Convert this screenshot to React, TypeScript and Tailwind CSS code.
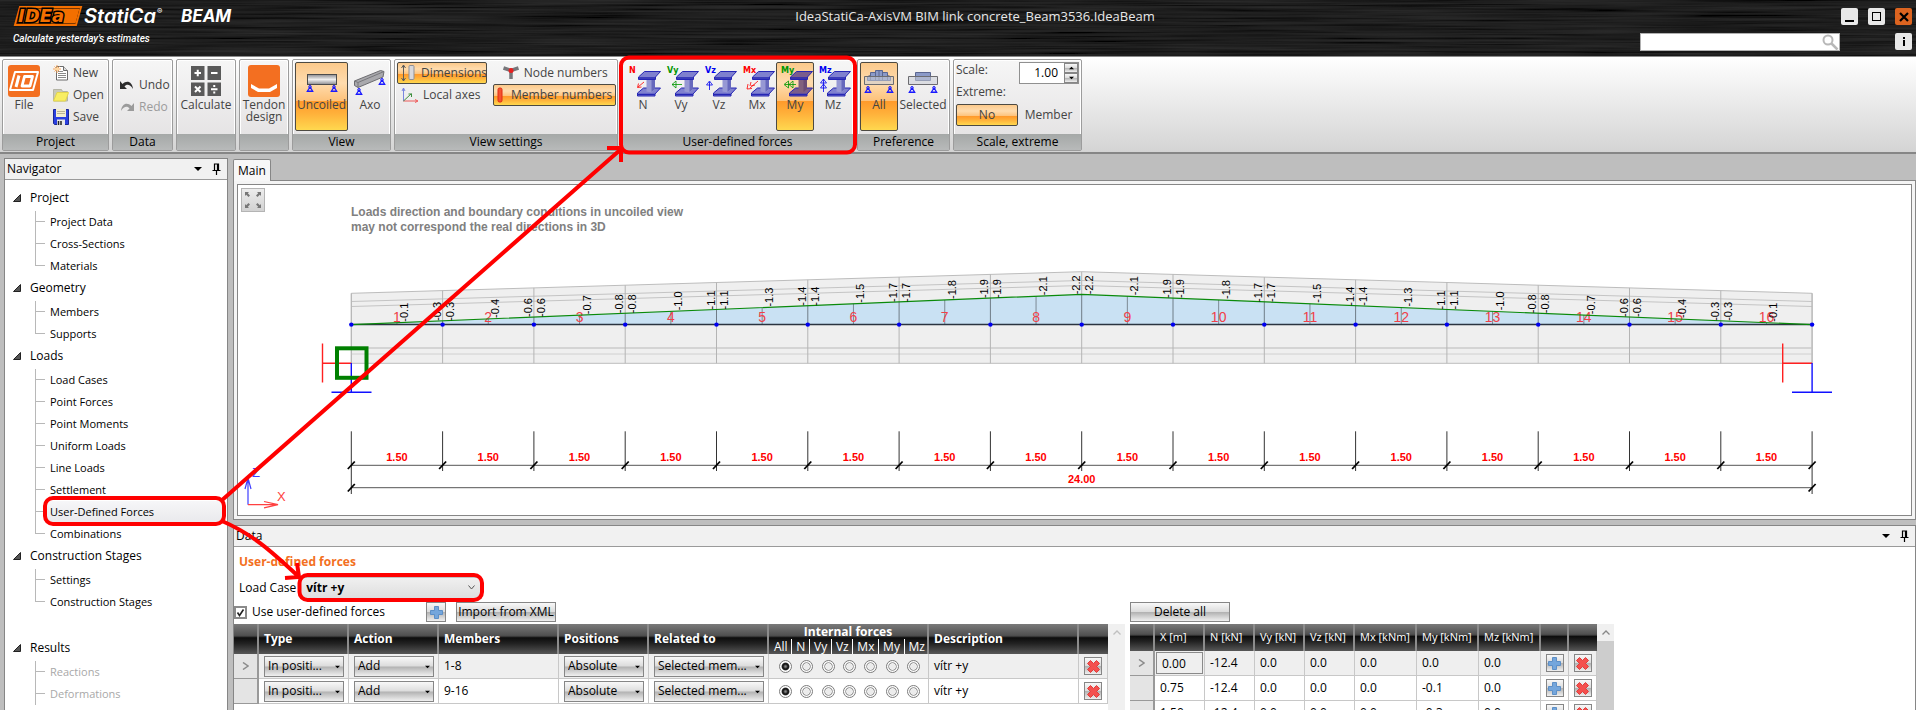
import clsx from "clsx";
import type { ReactNode } from "react";

type NavSection = {
  title: string;
  items: string[];
  disabled?: boolean;
  spaced?: boolean;
};

const navSections: NavSection[] = [
  { title: "Project", items: ["Project Data", "Cross-Sections", "Materials"] },
  { title: "Geometry", items: ["Members", "Supports"] },
  {
    title: "Loads",
    items: [
      "Load Cases",
      "Point Forces",
      "Point Moments",
      "Uniform Loads",
      "Line Loads",
      "Settlement",
      "User-Defined Forces",
      "Combinations",
    ],
  },
  {
    title: "Construction Stages",
    items: ["Settings", "Construction Stages"],
  },
  {
    title: "Results",
    items: ["Reactions", "Deformations"],
    disabled: true,
    spaced: true,
  },
];

const forceColumns = ["All", "N", "Vy", "Vz", "Mx", "My", "Mz"];

const impulseRows = [
  { id: "a", members: "1-8", description: "vítr +y" },
  { id: "b", members: "9-16", description: "vítr +y" },
];

const valueHeaders = [
  "X [m]",
  "N [kN]",
  "Vy [kN]",
  "Vz [kN]",
  "Mx [kNm]",
  "My [kNm]",
  "Mz [kNm]",
];

const valueRows = [
  ["0.00", "-12.4", "0.0", "0.0", "0.0", "0.0", "0.0"],
  ["0.75", "-12.4", "0.0", "0.0", "0.0", "-0.1", "0.0"],
  ["1.50", "-12.4", "0.0", "0.0", "0.0", "-0.3", "0.0"],
];

const activeClass =
  "border-[#4d4a42] bg-[linear-gradient(#fbc98b_0%,#ffdcae_30%,#fdc27a_56%,#ff9a2b_57%,#ffb03a_75%,#ffd84f_100%)]";
const metalClass =
  "border border-[#868686] bg-[linear-gradient(#f8f8f8_0%,#dcdcdc_48%,#b2b2b2_52%,#d0d0d0_75%,#f0f0f0_100%)]";
const headClass =
  "bg-[linear-gradient(#7a7a7a_0%,#505050_38%,#363636_42%,#0d0d0d_46%,#222222_65%,#575757_100%)]";

/* ---------- icons ---------- */

const FileIcon = () => (
  <svg width="32" height="32" viewBox="0 0 32 32" className="shrink-0">
    <rect width="32" height="32" rx="3" fill="#f36f21" />
    <g fill="none" stroke="#fff">
      <path d="M7 7h23l-5 18H2z" strokeWidth="2" strokeLinejoin="round" />
      <path d="M11 10.500L8 22" strokeWidth="3" />
      <path d="M16.500 11.500h8l-2.500 9.500h-8z" strokeWidth="2.800" strokeLinejoin="round" />
    </g>
  </svg>
);

const NewIcon = () => (
  <svg width="16" height="16" viewBox="0 0 16 16" className="shrink-0">
    <path d="M3.500 1.500h7l4 4v9.500h-11z" fill="#fff" stroke="#6b6b6b" />
    <path d="M10.500 1.500v4h4" fill="#ddd" stroke="#6b6b6b" />
    <path d="M5 6.500h5M5 8.500h8M5 10.500h8M5 12.500h8" stroke="#8a8a8a" />
    <path d="M4 0v8M0 4h8M1.500 1.500l5 5M6.500 1.500l-5 5" stroke="#f5a55a" />
    <circle cx="4" cy="4" r="1.600" fill="#ffd9a0" />
  </svg>
);

const OpenIcon = () => (
  <svg width="16" height="16" viewBox="0 0 16 16" className="shrink-0">
    <path d="M.5 2.500h8l1 2h5V14H.5z" fill="#c9c9b8" stroke="#b5b5a5" />
    <path d="M4 5.500h11.500L12.500 14H.5z" fill="#f8ee62" stroke="#e2d44d" />
  </svg>
);

const SaveIcon = () => (
  <svg width="16" height="16" viewBox="0 0 16 16" className="shrink-0">
    <path d="M.5.500h15v15h-14l-1-1z" fill="#2a3fe0" stroke="#1b2794" />
    <rect x="3" y="0" width="10" height="8" fill="#f3edcf" />
    <path d="M4 2.500h8M4 4.500h8" stroke="#b9b297" />
    <rect x="4" y="10.500" width="8" height="5.500" fill="#e8e8e8" />
    <path d="M5.500 12v4M8 12v4" stroke="#222" strokeWidth="1.500" />
  </svg>
);

const UndoIcon = ({ redo }: { redo?: boolean }) => (
  <svg
    width="16"
    height="16"
    viewBox="0 0 16 16"
    className={clsx("shrink-0", redo && "-scale-x-100")}
  >
    <path
      d="M1 4v8h7L5.500 9.500C7.500 7 11 7 14 12 13.500 5 8 2.500 3.500 7z"
      fill={redo ? "#9b9b9b" : "#2c2c2c"}
    />
  </svg>
);

const CalculateIcon = () => (
  <svg width="32" height="32" viewBox="0 0 32 32" className="shrink-0">
    <path d="M1 1h13.500v14H1zM17.500 1H31v14H17.500zM1 17.500h13.500V31H1zM17.500 17.500H31V31H17.500z" fill="#5a5a5a" />
    <path
      d="M4.500 8h6.500M7.750 4.750v6.500M21 8h6.500M5 21.500l5.500 5.500M10.500 21.500L5 27M21 24.250h6.500"
      stroke="#fff"
      strokeWidth="2"
      fill="none"
    />
    <path d="M23.250 20h2v2h-2zM23.250 26.500h2v2h-2z" fill="#fff" />
  </svg>
);

const TendonIcon = () => (
  <svg width="32" height="32" viewBox="0 0 32 32" className="shrink-0">
    <rect width="32" height="32" rx="3" fill="#f36f21" />
    <path d="M3 19l8 4.500h10l8-4.500v4l-7 4H10l-7-4z" fill="#fff" />
  </svg>
);

const BeamSupport = ({ x, y }: { x: number; y: number }) => (
  <g transform={`translate(${x} ${y})`} fill="none" stroke="#1a1aff">
    <circle cx="0" cy="1.300" r="1.300" />
    <path d="M0 1.500l-2.500 4h5zM-3.500 6h7" strokeWidth="1.200" />
  </g>
);

const UncoiledIcon = () => (
  <svg width="32" height="32" viewBox="0 0 32 32" className="shrink-0">
    <defs>
      <linearGradient id="steel" x1="0" y1="0" x2="0" y2="1">
        <stop offset="0" stopColor="#8c8c90" />
        <stop offset=".5" stopColor="#f0f0f0" />
        <stop offset="1" stopColor="#8c8c90" />
      </linearGradient>
    </defs>
    <rect x="1.500" y="9.500" width="29" height="10" fill="url(#steel)" stroke="#4c4c4c" />
    <BeamSupport x={4} y={20.500} />
    <BeamSupport x={28} y={20.500} />
  </svg>
);

const AxoIcon = () => (
  <svg width="32" height="32" viewBox="0 0 32 32" className="shrink-0">
    <path d="M.5 16l26-10.500 3.500 1-1 5.500L4 22.500.5 20.500z" fill="#a9a9ad" stroke="#6c6c70" />
    <path d="M.5 16l3.500 1.500L30 6.500M4 17.500v5" fill="none" stroke="#77777b" />
    <BeamSupport x={5} y={23.500} />
    <BeamSupport x={28} y={13.500} />
  </svg>
);

const DimensionsIcon = () => (
  <svg width="16" height="18" viewBox="0 0 16 18" className="shrink-0">
    <path d="M2.500 1v16M.5 4l2-3 2 3M.5 14l2 3 2-3" fill="none" stroke="#5b5b5b" />
    <rect x="8" y="1.500" width="5" height="14" rx="1" fill="#d8d8dc" stroke="#8f8f94" />
  </svg>
);

const LocalAxesIcon = () => (
  <svg width="18" height="16" viewBox="0 0 18 16" className="shrink-0">
    <path d="M2.500 14V1M1 4l1.500-3L4 4" fill="none" stroke="#7a86e0" />
    <path d="M2.500 14h14M14 12.500l3 1.500-3 1.500" fill="none" stroke="#ee5a5a" />
    <path d="M2.500 14l8-7.500M7.500 7h3v3" fill="none" stroke="#3f8f3f" />
  </svg>
);

const NodeIcon = () => (
  <svg width="18" height="16" viewBox="0 0 18 16" className="shrink-0">
    <path d="M1.500 3L9 5.500 16.500 3M9 5.500V14" stroke="#77777b" strokeWidth="3.500" fill="none" />
    <circle cx="9" cy="5.500" r="2.500" fill="#e82020" />
  </svg>
);

const MemberIcon = () => (
  <svg width="6" height="16" viewBox="0 0 6 16" className="shrink-0">
    <rect x="1" y="1" width="4" height="14" rx="1.500" fill="#f5532e" stroke="#e02a12" />
  </svg>
);

const forceArrows: Record<string, string> = {
  N: "M15 17l-6 5M9.500 18.500L8.500 22.500l4-.5",
  Vy: "M15 19.500H5M9 16l-4 3.500 4 3.500z",
  Vz: "M4.500 25v-8M1.500 20l3-4 3 4z",
  Mx: "M15 16l-8 7M4 24l1-5M4 24l5-.5M7 21l1-4M8 21l4-1",
  My: "M15 19.500H4M7.500 16L3 19.500 7.500 23zM12 16l-4 3.500 4 3.500z",
  Mz: "M4.500 27V14M1.500 18l3-4 3 4zM1.500 23l3-4 3 4z",
};

const forceColors: Record<string, string> = {
  N: "#ff0000",
  Vy: "#009600",
  Vz: "#0000f0",
  Mx: "#ff0000",
  My: "#009600",
  Mz: "#0000f0",
};

const ForceIcon = ({ name, dark }: { name: string; dark?: boolean }) => (
  <svg
    width="32"
    height="32"
    viewBox="-2 0 32 32"
    className="shrink-0 overflow-visible"
  >
    <g stroke="#2626b4" strokeWidth="1" strokeLinejoin="round">
      <path d="M8.500 28l6-5h17l-5.500 6v2H8.500z" fill={dark ? "#7a5c8c" : "#7f80cf"} />
      <path d="M17.500 14v12.500l5 1 3.500-3V13z" fill={dark ? "#81607e" : "#9698d4"} stroke="none" />
      <path d="M22.500 14v13l3.500-3V12z" fill={dark ? "#6b4b75" : "#6668bd"} stroke="none" />
      <path d="M9.500 12l6-5.500h16l-5 5.500v2.500h-17z" fill={dark ? "#7a5c8c" : "#7f80cf"} />
      <path d="M9.500 13h17M8.500 29.500H26" fill="none" strokeWidth="1.500" />
    </g>
    <path d={forceArrows[name]} fill="none" stroke={forceColors[name]} strokeOpacity=".8" />
    <text
      x="0"
      y="8"
      fill={forceColors[name]}
      className="font-['DejaVu_Sans'] text-[8px] font-bold"
    >
      {name}
    </text>
  </svg>
);

const PreferenceIcon = ({ all }: { all?: boolean }) => (
  <svg width="32" height="32" viewBox="0 0 32 32" className="shrink-0">
    {all ? (
      <path
        d="M4.500 15.500v-4l3-1v-3h5v-2h7v2h5v3l3 1v4zM7.500 10v5M12.500 7v8M16 5.500V15M19.500 7v8M24.500 10v5"
        fill="#8b9ac8"
        stroke="#5a6690"
      />
    ) : (
      <path d="M8.500 7.500h15v8h-15z" fill="#8b9ac8" stroke="#5a6690" />
    )}
    <path d="M1.500 11.500h29v8h-29z" fill="#c9ccd6" fillOpacity=".55" stroke="#6c6c70" />
    <BeamSupport x={5} y={21.500} />
    <BeamSupport x={27} y={21.500} />
  </svg>
);

const PinIcon = () => (
  <svg width="9" height="12" viewBox="0 0 9 12">
    <path d="M2.500 7V1h4v6M5.500 1v6M.5 7.500h8M4.500 8v4" fill="none" stroke="#000" strokeWidth="1.200" />
  </svg>
);

const CaretIcon = ({ className }: { className?: string }) => (
  <svg width="8" height="4" viewBox="0 0 8 4" className={className}>
    <path d="M0 0h8L4 4z" fill="#000" />
  </svg>
);

const PlusIcon = () => (
  <svg width="15" height="15" viewBox="0 0 15 15">
    <path d="M5.500 1.500h4v4h4v4h-4v4h-4v-4h-4v-4h4z" fill="#74a6dc" stroke="#5d8fc6" />
  </svg>
);

const DeleteIcon = () => (
  <svg width="13" height="13" viewBox="0 0 13 13">
    <path
      d="M3.500.5l3 3 3-3 3 3-3 3 3 3-3 3-3-3-3 3-3-3 3-3-3-3z"
      fill="#f4504e"
      stroke="#e13c3a"
    />
  </svg>
);

/* ---------- title bar ---------- */

const windowButton =
  "flex size-[17px] items-center justify-center rounded-xs bg-[#e8e8e8]";

const TitleBar = () => (
  <header className="relative flex h-14 shrink-0 justify-between bg-black text-white">
    <svg className="absolute inset-0 h-full w-full opacity-20" aria-hidden="true">
      <filter id="brushed">
        <feTurbulence type="fractalNoise" baseFrequency="0.006 0.45" numOctaves="3" seed="4" />
        <feColorMatrix values="1 0 0 0 -0.2  1 0 0 0 -0.2  1 0 0 0 -0.2  0 0 0 0 1" />
      </filter>
      <rect width="100%" height="100%" filter="url(#brushed)" />
    </svg>
    <svg className="relative shrink-0" width="310" height="56" viewBox="0 0 310 56">
      <path d="M20 7h61l-5 18H15z" fill="#000" stroke="#f36f00" strokeWidth="2" />
      <path d="M20.500 8.500h59l-4 15h-59z" fill="#f36f00" />
      <text
        x="18"
        y="22"
        fill="#f36f00"
        stroke="#000"
        strokeWidth="3"
        paintOrder="stroke"
        className="font-['DejaVu_Sans'] text-[18px] font-bold italic"
      >
        IDEa
      </text>
      <text x="84" y="23" fill="#fff" className="font-[Inter] text-[20px] font-semibold italic">
        StatiCa
      </text>
      <text x="157" y="14" fill="#fff" className="font-[Inter] text-[8px]">
        ®
      </text>
      <text x="181" y="22" fill="#fff" className="font-[Inter] text-[17px] font-bold italic">
        BEAM
      </text>
      <text x="13" y="42" fill="#fff" className="font-[Roboto] text-[10px] font-medium italic">
        Calculate yesterday's estimates
      </text>
    </svg>
    <h1 className="relative pt-[6px] text-[13px] leading-5 text-[#e8e8e8]">
      IdeaStatiCa-AxisVM BIM link concrete_Beam3536.IdeaBeam
    </h1>
    <div className="relative flex w-[276px] shrink-0 flex-col gap-2 pt-2 pr-1">
      <div className="flex justify-end gap-[10px]">
        <button className={windowButton} aria-label="Minimize">
          <span className="mt-2 h-[2px] w-[9px] bg-black" />
        </button>
        <button className={windowButton} aria-label="Maximize">
          <span className="size-[9px] border border-black" />
        </button>
        <button
          className="flex size-[17px] items-center justify-center rounded-xs bg-[#dc6420]"
          aria-label="Close"
        >
          <svg width="10" height="10" viewBox="0 0 10 10">
            <path d="M1 1l8 8M9 1L1 9" stroke="#000" strokeWidth="2.200" />
          </svg>
        </button>
      </div>
      <div className="flex items-start justify-between">
        <label className="relative flex">
          <input
            type="search"
            aria-label="Search"
            className="h-[18px] w-[200px] border border-[#b0b0b0] bg-white text-xs text-black"
          />
          <svg width="17" height="17" viewBox="0 0 17 17" className="absolute top-px right-px">
            <circle cx="6" cy="6" r="4.500" fill="none" stroke="#b8b8b8" strokeWidth="2" />
            <path d="M9.500 9.500l6 6" stroke="#b8b8b8" strokeWidth="2.500" />
          </svg>
        </label>
        <button className={windowButton} aria-label="Info">
          <svg width="4" height="9" viewBox="0 0 4 9">
            <path d="M1 0h2v2H1zM1 3h2v6H1z" fill="#000" />
          </svg>
        </button>
      </div>
    </div>
  </header>
);

/* ---------- ribbon ---------- */

const RibbonGroup = ({
  title,
  className,
  children,
}: {
  title?: string;
  className?: string;
  children: ReactNode;
}) => (
  <section
    className={clsx(
      "flex h-[92px] shrink-0 flex-col rounded-xs border border-[#9c9c9c] bg-linear-to-b from-[#f6f6f6] to-[#e2e0e1] shadow-[inset_0_0_0_1px_#fff]",
      className
    )}
  >
    <div className="flex flex-1 items-start px-[2px] pt-[2px]">{children}</div>
    <h2 className="h-4 bg-linear-to-b from-[#a5a8a7] to-[#b8baba] text-center text-xs leading-4 text-black">
      {title}
    </h2>
  </section>
);

const BigButton = ({
  icon,
  label,
  active,
  className,
}: {
  icon: ReactNode;
  label: string;
  active?: boolean;
  className?: string;
}) => (
  <button
    aria-pressed={active}
    className={clsx(
      "flex h-[69px] shrink-0 flex-col items-center gap-[2px] rounded-xs border pt-[2px] text-xs leading-3 text-[#444]",
      active ? activeClass : "border-transparent",
      className
    )}
  >
    {icon}
    <span>{label}</span>
  </button>
);

const SmallButton = ({
  icon,
  label,
  active,
  disabled,
  className,
}: {
  icon?: ReactNode;
  label: string;
  active?: boolean;
  disabled?: boolean;
  className?: string;
}) => (
  <button
    aria-pressed={active}
    disabled={disabled}
    className={clsx(
      "flex h-[22px] items-center rounded-xs border px-[3px] text-xs whitespace-nowrap",
      disabled ? "text-[#9b9b9b]" : "text-[#444]",
      active ? activeClass : "border-transparent",
      className
    )}
  >
    {icon}
    <span>{label}</span>
  </button>
);

const Divider = () => <div className="mx-[3px] mt-[5px] h-[58px] w-px bg-[#a2a2a2]" />;

const Ribbon = () => (
  <div className="flex h-[98px] shrink-0 gap-[3px] border-t border-b-2 border-t-[#8b8b8b] border-b-[#868686] bg-linear-to-b from-white to-[#d4d4d4] px-[2px] pt-[2px]">
    <RibbonGroup title="Project" className="w-[107px]">
      <BigButton icon={<FileIcon />} label="File" className="w-[38px]" />
      <Divider />
      <div className="flex flex-col">
        <SmallButton icon={<NewIcon />} label="New" className="gap-1" />
        <SmallButton icon={<OpenIcon />} label="Open" className="gap-1" />
        <SmallButton icon={<SaveIcon />} label="Save" className="gap-1" />
      </div>
    </RibbonGroup>
    <RibbonGroup title="Data" className="w-[61px]">
      <div className="flex flex-col pt-3">
        <SmallButton icon={<UndoIcon />} label="Undo" className="gap-1" />
        <SmallButton icon={<UndoIcon redo />} label="Redo" disabled className="gap-1" />
      </div>
    </RibbonGroup>
    <RibbonGroup className="w-[60px]">
      <BigButton icon={<CalculateIcon />} label="Calculate" className="w-[54px]" />
    </RibbonGroup>
    <RibbonGroup className="w-[50px]">
      <BigButton icon={<TendonIcon />} label="Tendon design" className="w-11" />
    </RibbonGroup>
    <RibbonGroup title="View" className="w-[99px]">
      <BigButton icon={<UncoiledIcon />} label="Uncoiled" active className="w-[53px]" />
      <BigButton icon={<AxoIcon />} label="Axo" className="w-11" />
    </RibbonGroup>
    <RibbonGroup title="View settings" className="w-[224px]">
      <div className="flex w-[90px] flex-col">
        <SmallButton icon={<DimensionsIcon />} label="Dimensions" active className="gap-1" />
        <SmallButton icon={<LocalAxesIcon />} label="Local axes" className="gap-1" />
      </div>
      <Divider />
      <div className="flex flex-1 flex-col">
        <SmallButton icon={<NodeIcon />} label="Node numbers" className="justify-center gap-1" />
        <SmallButton
          icon={<MemberIcon />}
          label="Member numbers"
          active
          className="justify-end gap-2"
        />
      </div>
    </RibbonGroup>
    <RibbonGroup title="User-defined forces" className="w-[233px]">
      {forceColumns.slice(1).map((name) => (
        <BigButton
          key={name}
          icon={<ForceIcon name={name} dark={name === "My"} />}
          label={name}
          active={name === "My"}
          className="w-[38px]"
        />
      ))}
    </RibbonGroup>
    <RibbonGroup title="Preference" className="w-[93px]">
      <BigButton icon={<PreferenceIcon all />} label="All" active className="w-[38px]" />
      <BigButton icon={<PreferenceIcon />} label="Selected" className="w-[50px]" />
    </RibbonGroup>
    <RibbonGroup title="Scale, extreme" className="w-[129px]">
      <div className="flex flex-1 flex-col text-xs text-[#444]">
        <div className="flex h-[22px] justify-between">
          <label htmlFor="scale">Scale:</label>
          <div className="flex border border-[#909090] bg-white">
            <input
              id="scale"
              defaultValue="1.00"
              className="w-11 pr-[6px] text-right text-xs text-black"
            />
            <div className="flex w-[14px] flex-col">
              <button aria-label="Increase" className={clsx("flex flex-1 items-center justify-center", metalClass)}>
                <CaretIcon className="w-[5px] rotate-180" />
              </button>
              <button aria-label="Decrease" className={clsx("flex flex-1 items-center justify-center", metalClass)}>
                <CaretIcon className="w-[5px]" />
              </button>
            </div>
          </div>
        </div>
        <span className="h-5">Extreme:</span>
        <div className="flex">
          <SmallButton label="No" active className="w-[62px] justify-center" />
          <SmallButton label="Member" className="flex-1 justify-center" />
        </div>
      </div>
    </RibbonGroup>
  </div>
);

/* ---------- navigator ---------- */

const PanelHeader = ({ title }: { title: string }) => (
  <div className="flex h-[21px] shrink-0 items-center border-b border-[#9a9a9a] bg-[#f1f1f1] px-[2px] text-xs text-black">
    <h2 className="flex-1">{title}</h2>
    <button aria-label="Panel menu" className="mr-[10px]">
      <CaretIcon />
    </button>
    <button aria-label="Pin panel" className="mr-1">
      <PinIcon />
    </button>
  </div>
);

const Navigator = () => (
  <aside className="flex w-[224px] shrink-0 flex-col overflow-hidden border border-b-0 border-[#868686] bg-white text-black">
    <PanelHeader title="Navigator" />
    <nav className="flex flex-col pt-[7px]">
      {navSections.map((section) => (
        <div key={section.title} className={clsx(section.spaced && "pt-6")}>
          <div className="flex h-6 items-center pb-[2px] pl-2 text-xs">
            <svg width="8" height="8" viewBox="0 0 8 8">
              <path d="M7.500.5v7h-7z" fill="#555" stroke="#222" />
            </svg>
            <span className="ml-[9px]">{section.title}</span>
          </div>
          <ul>
            {section.items.map((item, index) => (
              <li key={item} className="flex h-[22px] pl-[30px]">
                <div className="relative w-[10px] shrink-0 border-l border-[#b8b8b8]">
                  {!section.disabled && index === section.items.length - 1 && (
                    <div className="absolute top-[11px] -left-px h-[11px] w-px bg-white" />
                  )}
                  <div className="mt-[10px] h-px bg-[#b8b8b8]" />
                </div>
                <a
                  href="#"
                  className={clsx(
                    "mr-[3px] flex-1 pl-[5px] text-[11px] leading-[22px]",
                    section.disabled && "text-[#a8a8a8]",
                    item === "User-Defined Forces" &&
                      "bg-linear-to-b from-[#f6f6f8] to-[#e9e9ec]"
                  )}
                >
                  {item}
                </a>
              </li>
            ))}
          </ul>
        </div>
      ))}
    </nav>
  </aside>
);

/* ---------- beam drawing ---------- */

const LEFT = 351.3;
const STEP = 91.3;
const AXIS = 324.6;
const PEAK = 294.3;
const nodes = Array.from({ length: 17 }, (_, i) => i);
const members = Array.from({ length: 16 }, (_, i) => i);
const nodeValues = ["", "-0.3", "-0.6", "-0.8", "-1.1", "-1.4", "-1.7", "-1.9", "-2.2"];
const midValues = ["-0.1", "-0.4", "-0.7", "-1.0", "-1.3", "-1.5", "-1.8", "-2.1"];

const nodeX = (i: number) => LEFT + i * STEP;
const ratio = (i: number) => 1 - Math.abs(i - 8) / 8;
const curveY = (i: number) => AXIS - (AXIS - PEAK) * ratio(i);
const topY = (i: number) => 293.3 - 21.6 * ratio(i);

const RotatedValue = ({ x, y, value }: { x: number; y: number; value: string }) => (
  <text
    transform={`translate(${x} ${y}) rotate(-90)`}
    className="font-['Liberation_Sans'] text-[11px]"
  >
    {value}
  </text>
);

const BeamDrawing = () => {
  const right = nodeX(16);
  const middle = nodeX(8);

  return (
    <svg viewBox="238 185 1673 330" className="block w-full">
      <text className="font-['Liberation_Sans'] text-[12px] font-bold" fill="#808080">
        <tspan x="351" y="216">
          Loads direction and boundary conditions in uncoiled view
        </tspan>
        <tspan x="351" y="231">
          may not correspond the real directions in 3D
        </tspan>
      </text>

      <path
        d={`M${LEFT} 293.3L${middle} 271.7L${right} 293.3V363.3H${LEFT}z`}
        fill="#efefef"
        stroke="#bdbdbd"
      />
      <path
        d={`M${LEFT} 301.500L${middle} 280.500L${right} 301.500M${LEFT} 306.500L${middle} 285.500L${right} 306.500`}
        fill="none"
        stroke="#c4c4c4"
      />
      <path d={`M${LEFT} 348H${right}`} stroke="#d4d4d4" strokeWidth="2" />
      <path d={`M${LEFT} 354H${right}`} stroke="#d0d0d0" />
      {nodes.map((i) => (
        <path key={i} d={`M${nodeX(i)} ${topY(i)}V363.3`} stroke="#b4b4b4" />
      ))}

      <path d={`M${LEFT} ${AXIS}L${middle} ${PEAK}L${right} ${AXIS}z`} fill="#c9e1f3" />
      {nodes.map((i) => (
        <path key={i} d={`M${nodeX(i)} ${curveY(i)}V${AXIS}`} stroke="#6f7c86" />
      ))}
      {members.map((i) => (
        <path key={i} d={`M${nodeX(i + 0.5)} ${curveY(i + 0.5)}V${AXIS}`} stroke="#7d8a94" />
      ))}

      {members.map((i) => (
        <text
          key={i}
          x={nodeX(i + 0.5)}
          y="322"
          textAnchor="middle"
          fill="#f04048"
          className="font-['Liberation_Sans'] text-[14px]"
        >
          {i + 1}
        </text>
      ))}

      <path d={`M${LEFT} ${AXIS}H${right}`} stroke="#2b3440" strokeWidth="1.500" />
      <path
        d={`M${LEFT} ${AXIS}L${middle} ${PEAK}L${right} ${AXIS}`}
        fill="none"
        stroke="#0a8a0a"
        strokeWidth="1.200"
      />
      {nodes.map((i) => (
        <circle key={i} cx={nodeX(i)} cy={AXIS} r="2.200" fill="#0000f0" />
      ))}

      {nodes.slice(1, 16).map((i) => {
        const value = nodeValues[i > 8 ? 16 - i : i];
        return (
          <g key={i}>
            <RotatedValue x={nodeX(i) - 2} y={curveY(i)} value={value} />
            <RotatedValue x={nodeX(i) + 11} y={curveY(i)} value={value} />
          </g>
        );
      })}
      {members.map((i) => (
        <RotatedValue
          key={i}
          x={nodeX(i + 0.5) + 11}
          y={curveY(i + 0.5) - 1}
          value={midValues[i > 7 ? 15 - i : i]}
        />
      ))}

      {/* supports */}
      <g fill="none" strokeWidth="1.400">
        <path d={`M322.500 343.500v39M322.500 363.300H${LEFT}`} stroke="#ff2020" />
        <path d={`M${LEFT} 363v29M331.500 392.300h40`} stroke="#1010ff" />
        <path d={`M1782.700 343.500v39M1782.700 363.300H${right}`} stroke="#ff2020" />
        <path d={`M${right} 363v29M1792 392.300h40`} stroke="#1010ff" />
        <rect x="337" y="348.300" width="29.500" height="29.500" stroke="#008000" strokeWidth="4" />
      </g>

      {/* dimension lines */}
      <g stroke="#555" fill="none">
        <path d={`M${LEFT} 465.300H${right}M${LEFT} 487.700H${right}`} />
        {nodes.map((i) => (
          <path
            key={i}
            d={`M${nodeX(i)} 431.300V${i === 0 || i === 16 ? 494 : 471}`}
            stroke="#333"
          />
        ))}
      </g>
      <g stroke="#000" strokeWidth="1.800">
        {nodes.map((i) => (
          <path key={i} d={`M${nodeX(i) - 3.5} 469l7-7.500`} />
        ))}
        <path d={`M${LEFT - 3.5} 491.500l7-7.500M${right - 3.5} 491.500l7-7.500`} />
      </g>
      <g fill="#ff0000" textAnchor="middle" className="font-['Liberation_Sans'] text-[11px] font-bold">
        {members.map((i) => (
          <text key={i} x={nodeX(i + 0.5)} y="461">
            1.50
          </text>
        ))}
        <text x={middle} y="483">
          24.00
        </text>
      </g>

      {/* axis triad */}
      <g fill="none" strokeWidth="1.200">
        <path d="M248 504.700V478M245 489l3-11 3 11" stroke="#4040ff" />
        <path d="M248 504.700h30M264 501.500l14 3.200-14 3.200" stroke="#ff4040" />
      </g>
      <text x="252" y="477" fill="#4040ff" className="font-['Liberation_Sans'] text-[13px]">
        Z
      </text>
      <text x="277" y="501" fill="#ff4040" className="font-['Liberation_Sans'] text-[13px]">
        X
      </text>
    </svg>
  );
};

const MainView = () => (
  <section className="flex shrink-0 flex-col">
    <div role="tablist" className="flex h-[22px]">
      <button
        role="tab"
        aria-selected="true"
        className="relative top-px w-[38px] rounded-t-xs border border-b-0 border-[#868686] bg-[#f7f7f7] text-xs text-black"
      >
        Main
      </button>
    </div>
    <div className="border border-[#868686] bg-[#f4f4f4] p-[3px]">
      <div className="relative border border-[#868686] bg-white">
        <BeamDrawing />
        <button
          aria-label="Zoom all"
          className="absolute top-[3px] left-[3px] flex size-6 items-center justify-center border border-[#b4b4b4] bg-linear-to-b from-[#ededed] to-[#d2d2d2]"
        >
          <svg width="16" height="16" viewBox="0 0 16 16" fill="#777">
            <path d="M0 0h4L2.800 1.200 5 3.500 3.500 5 1.200 2.800 0 4zM16 0v4l-1.200-1.200L12.500 5 11 3.500l2.200-2.300L12 0zM0 16v-4l1.200 1.200L3.500 11 5 12.500l-2.200 2.300L4 16zM16 16h-4l1.200-1.200L11 12.500l1.500-1.500 2.300 2.200L16 12z" />
          </svg>
        </button>
      </div>
    </div>
  </section>
);

/* ---------- data panel ---------- */

const CellSelect = ({ label, value }: { label: string; value: string }) => (
  <div className="relative mr-1 ml-[5px] flex">
    <select
      aria-label={label}
      className={clsx("h-[21px] w-full appearance-none px-[3px] text-xs text-black", metalClass)}
    >
      <option>{value}</option>
    </select>
    <CaretIcon className="pointer-events-none absolute top-[9px] right-1 w-[5px]" />
  </div>
);

const IconButton = ({ label, children }: { label: string; children: ReactNode }) => (
  <button
    aria-label={label}
    className={clsx("mx-auto flex size-[18px] items-center justify-center", metalClass)}
  >
    {children}
  </button>
);

const headCell = "border-r-2 border-[#8c8c8c] py-0 pr-0 pl-[5px] text-left whitespace-nowrap";
const bodyCell = "h-[25px] border-r border-b border-[#c8c8c8] p-0";
const rowHead = "border-r-2 border-b border-r-[#999] border-b-[#999] bg-[#e4e4e4] p-0";

const RowMarker = () => (
  <svg width="7" height="8" viewBox="0 0 7 8" className="mx-auto">
    <path d="M1 .5L6 4 1 7.500" fill="none" stroke="#8b8b8b" strokeWidth="1.500" />
  </svg>
);

const ForcesTable = () => (
  <table className="w-[874px] table-fixed self-start border-separate border-spacing-0 text-xs text-black">
    <colgroup>
      <col className="w-[25px]" />
      <col className="w-[90px]" />
      <col className="w-[90px]" />
      <col className="w-[120px]" />
      <col className="w-[90px]" />
      <col className="w-[120px]" />
      <col className="w-[160px]" />
      <col className="w-[150px]" />
      <col className="w-[29px]" />
    </colgroup>
    <thead>
      <tr className={clsx("h-[30px] text-white", headClass)}>
        <th className={headCell} aria-label="Row" />
        <th className={headCell}>Type</th>
        <th className={headCell}>Action</th>
        <th className={headCell}>Members</th>
        <th className={headCell}>Positions</th>
        <th className={headCell}>Related to</th>
        <th className="border-r-2 border-[#8c8c8c] p-0">
          <div className="text-center leading-[15px]">Internal forces</div>
          <div className="flex justify-between pr-[2px] pl-[5px] leading-[15px] font-normal">
            {forceColumns.map((name, index) => (
              <span key={name} className="flex gap-1">
                {index > 0 && <span className="w-px bg-white" />}
                {name}
              </span>
            ))}
          </div>
        </th>
        <th className={headCell}>Description</th>
        <th aria-label="Delete" />
      </tr>
    </thead>
    <tbody>
      {impulseRows.map((row, index) => (
        <tr key={row.id} className={clsx(index === 0 && "bg-[#efefef]")}>
          <td className={rowHead}>{index === 0 && <RowMarker />}</td>
          <td className={bodyCell}>
            <CellSelect label="Type" value="In positi..." />
          </td>
          <td className={bodyCell}>
            <CellSelect label="Action" value="Add" />
          </td>
          <td className="border-r border-b border-[#c8c8c8] py-0 pr-0 pl-[5px]">{row.members}</td>
          <td className={bodyCell}>
            <CellSelect label="Positions" value="Absolute" />
          </td>
          <td className={bodyCell}>
            <CellSelect label="Related to" value="Selected mem..." />
          </td>
          <td className={bodyCell}>
            <div className="flex justify-between pr-2 pl-[10px]">
              {forceColumns.map((name) => (
                <input
                  key={name}
                  type="radio"
                  name={`force-${row.id}`}
                  aria-label={name}
                  defaultChecked={name === "All"}
                  className="size-[13px] appearance-none rounded-full border border-[#7c7c7c] bg-[radial-gradient(#ececec_30%,#f4f4f4_38%,#8a8a8a_48%,#fff_60%)] checked:bg-[radial-gradient(#888_6%,#111_32%,#222_44%,#fff_56%)]"
                />
              ))}
            </div>
          </td>
          <td className="border-r border-b border-[#c8c8c8] py-0 pr-0 pl-[5px]">{row.description}</td>
          <td className={bodyCell}>
            <IconButton label="Delete">
              <DeleteIcon />
            </IconButton>
          </td>
        </tr>
      ))}
    </tbody>
  </table>
);

const ValuesTable = () => (
  <table className="w-[467px] table-fixed self-start border-separate border-spacing-0 text-xs text-black">
    <colgroup>
      <col className="w-[25px]" />
      <col className="w-[50px]" />
      <col className="w-[50px]" />
      <col className="w-[50px]" />
      <col className="w-[50px]" />
      <col className="w-[62px]" />
      <col className="w-[62px]" />
      <col className="w-[62px]" />
      <col className="w-[28px]" />
      <col className="w-[28px]" />
    </colgroup>
    <thead>
      <tr className={clsx("h-[27px] text-white", headClass)}>
        <th className={headCell} aria-label="Row" />
        {valueHeaders.map((header) => (
          <th key={header} className={clsx(headCell, "text-[11px] font-normal")}>
            {header}
          </th>
        ))}
        <th className={headCell} aria-label="Add" />
        <th aria-label="Delete" />
      </tr>
    </thead>
    <tbody>
      {valueRows.map((row, index) => (
        <tr key={row[0]} className={clsx(index === 0 && "bg-[#efefef]")}>
          <td className={rowHead}>{index === 0 && <RowMarker />}</td>
          {row.map((value, column) => (
            <td key={column} className={bodyCell}>
              <div
                className={clsx(
                  "pl-[5px] leading-[22px]",
                  index === 0 && column === 0 && "mx-px h-[22px] border border-[#8a8a8a] pl-[3px] leading-5"
                )}
              >
                {value}
              </div>
            </td>
          ))}
          <td className={bodyCell}>
            <IconButton label="Add">
              <PlusIcon />
            </IconButton>
          </td>
          <td className={bodyCell}>
            <IconButton label="Delete">
              <DeleteIcon />
            </IconButton>
          </td>
        </tr>
      ))}
    </tbody>
  </table>
);

const ScrollBar = ({ disabled }: { disabled?: boolean }) => (
  <div className="flex w-[17px] shrink-0 flex-col self-stretch bg-[#f0f0f0]">
    <div className="flex h-[17px] items-center justify-center">
      <svg width="8" height="5" viewBox="0 0 8 5">
        <path d="M.5 4.500l3.500-3.500 3.500 3.500" fill="none" stroke={disabled ? "#c0c0c0" : "#888"} strokeWidth="1.300" />
      </svg>
    </div>
    {!disabled && <div className="flex-1 bg-[#cdcdcd]" />}
  </div>
);

const DataPanel = () => (
  <section className="flex min-h-0 flex-1 flex-col overflow-hidden border border-b-0 border-[#868686] bg-white text-black">
    <PanelHeader title="Data" />
    <div className="flex flex-1 gap-[5px] overflow-hidden">
      <div className="flex flex-col">
        <h3 className="mt-[7px] ml-[5px] text-xs leading-4 font-bold text-[#f36f21]">
          User-defined forces
        </h3>
        <div className="mt-1 ml-[5px] flex h-7 items-center gap-1 text-xs">
          <label htmlFor="load-case">Load Case</label>
          <div className="relative">
            <select
              id="load-case"
              className="block h-[22px] w-[182px] appearance-none border border-[#c2c2c2] bg-linear-to-b from-[#f0f0f0] to-[#dedede] px-[5px] text-xs font-bold"
            >
              <option>vítr +y</option>
            </select>
            <svg
              width="7"
              height="5"
              viewBox="0 0 7 5"
              className="pointer-events-none absolute top-2 right-[7px]"
            >
              <path d="M.5.5l3 3.500 3-3.500" fill="none" stroke="#555" />
            </svg>
          </div>
        </div>
        <div className="flex h-5 items-start text-xs">
          <label className="flex h-5 w-[192px] items-center gap-[5px]">
            <span className="relative flex">
              <input
                type="checkbox"
                defaultChecked
                className="size-[13px] appearance-none border-2 border-[#8a8a8a] bg-white"
              />
              <svg width="13" height="13" viewBox="0 0 13 13" className="absolute inset-0">
                <path d="M3.500 6.500l2 3 4-6" fill="none" stroke="#222" strokeWidth="1.600" />
              </svg>
            </span>
            Use user-defined forces
          </label>
          <button
            aria-label="Add"
            className={clsx("flex size-5 items-center justify-center", metalClass)}
          >
            <PlusIcon />
          </button>
          <button className={clsx("ml-[10px] h-5 w-[100px] whitespace-nowrap", metalClass)}>
            Import from XML
          </button>
        </div>
        <div className="mt-[2px] flex flex-1 overflow-hidden">
          <ForcesTable />
          <ScrollBar disabled />
        </div>
      </div>
      <div className="flex flex-col pt-[55px]">
        <button className={clsx("h-5 w-[100px] text-xs", metalClass)}>Delete all</button>
        <div className="mt-[2px] flex flex-1 overflow-hidden">
          <ValuesTable />
          <ScrollBar />
        </div>
      </div>
    </div>
  </section>
);

/* Callouts that tie the navigator entry to the ribbon group and the load case */
const Callouts = () => (
  <svg
    className="pointer-events-none absolute top-0 left-0"
    width="870"
    height="620"
    viewBox="0 0 870 620"
    fill="none"
    stroke="#ff0000"
    strokeWidth="4"
  >
    <rect x="621" y="57.500" width="234" height="95" rx="8" />
    <rect x="45" y="498" width="179" height="26" rx="8" />
    <rect x="299.500" y="575" width="182.500" height="25" rx="8" />
    <path d="M221 501L620 150M607 148h14v14" />
    <path d="M222 521c30 13 48 29 76 55M285 578l14-1-2-14" />
  </svg>
);

const App = () => {
  return (
    <div className="relative flex h-screen flex-col overflow-hidden bg-[#bebebe] font-['Open_Sans',sans-serif]">
      <TitleBar />
      <Ribbon />
      <main className="flex min-h-0 flex-1 gap-[5px] pt-[4px] pl-1">
        <div className="flex">
          <Navigator />
        </div>
        <div className="flex min-w-0 flex-1 flex-col gap-[5px]">
          <MainView />
          <DataPanel />
        </div>
      </main>
      <Callouts />
    </div>
  );
};

export default App;
